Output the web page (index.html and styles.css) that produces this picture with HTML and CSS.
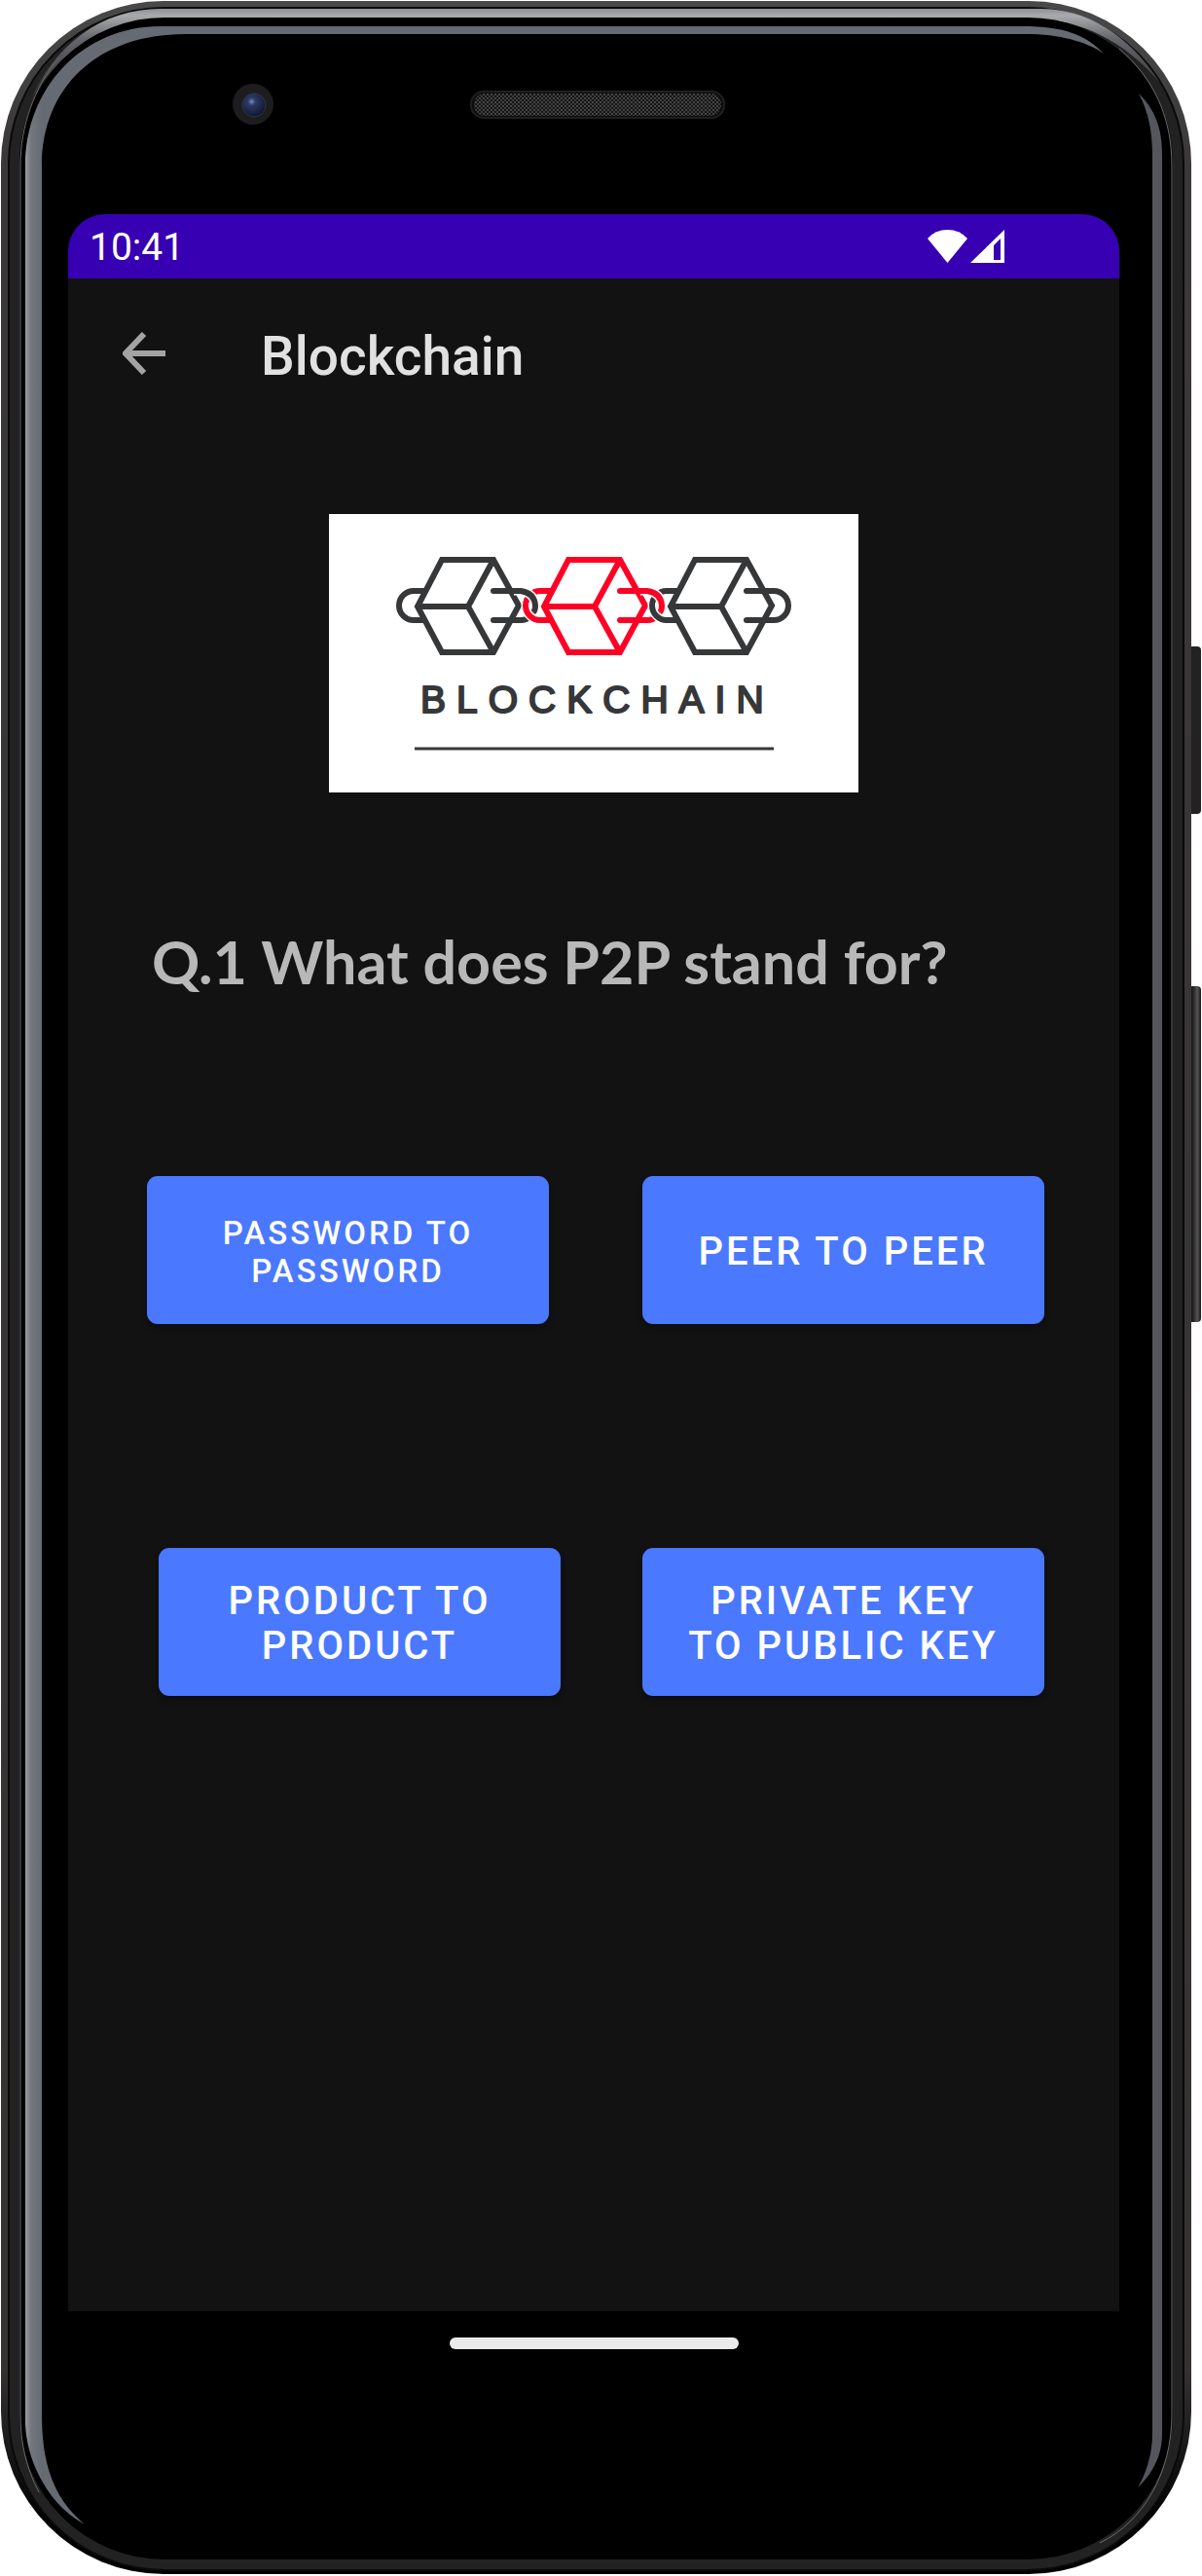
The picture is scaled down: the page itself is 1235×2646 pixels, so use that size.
FILE: index.html
```html
<!DOCTYPE html>
<html lang="en">
<head>
<meta charset="utf-8">
<meta name="viewport" content="width=device-width, initial-scale=1">
<title>Blockchain</title>
<link rel="stylesheet" href="styles.css">
</head>
<body>
<div class="phone">
  <svg class="phone-frame" viewBox="0 0 1235 2646" preserveAspectRatio="none" aria-hidden="true">
    <defs>
      <linearGradient id="shell" x1="0" y1="0" x2="0" y2="1">
        <stop offset="0" stop-color="#4a4949"/><stop offset=".06" stop-color="#3a3838"/>
        <stop offset=".92" stop-color="#353232"/><stop offset=".98" stop-color="#000"/>
      </linearGradient>
      <linearGradient id="shine" x1="0" y1="0" x2="0" y2="1">
        <stop offset="0" stop-color="#8e9094"/><stop offset=".07" stop-color="#a9aaae"/>
        <stop offset=".3" stop-color="#66686c"/><stop offset="1" stop-color="#222"/>
      </linearGradient>
      <linearGradient id="rim" gradientUnits="userSpaceOnUse" x1="26" y1="0" x2="43" y2="0">
        <stop offset="0" stop-color="#9a9b9d"/><stop offset=".35" stop-color="#73777d"/><stop offset="1" stop-color="#666a72"/>
      </linearGradient>
      <linearGradient id="key" x1="0" y1="0" x2="1" y2="0">
        <stop offset="0" stop-color="#0c0c0c"/><stop offset=".4" stop-color="#262626"/>
        <stop offset=".7" stop-color="#555"/><stop offset="1" stop-color="#181818"/>
      </linearGradient>
      <radialGradient id="lens" cx=".4" cy=".35" r=".65">
        <stop offset="0" stop-color="#7c8bb2"/><stop offset=".25" stop-color="#2b3a68"/><stop offset="1" stop-color="#10172f"/>
      </radialGradient>
      <pattern id="mesh" width="4" height="4" patternUnits="userSpaceOnUse">
        <rect width="4" height="4" fill="#161616"/><circle cx="1" cy="1" r="1" fill="#555"/><circle cx="3" cy="3" r="1" fill="#484848"/>
      </pattern>
    </defs>
    <rect x="1221" y="664" width="13" height="172" rx="4" fill="#222"/>
    <rect x="1221" y="1013" width="13" height="345" rx="4" fill="url(#key)"/>
    <rect x="1" y="1" width="1223" height="2643" rx="167" fill="url(#shell)"/>
    <rect x="9" y="8" width="1207" height="2632" rx="160" fill="#222" stroke="#0a0a0a" stroke-width="2"/>
    <path fill="url(#shine)" d="M28 110C55 45 105 9 165 9H1070C1115 9 1160 35 1192 85C1155 42 1110 20 1065 20H165C110 20 60 50 28 110Z"/>
    <rect x="21" y="19" width="1183" height="2609" rx="148" fill="#000" stroke="#000" stroke-width="2"/>
    <path fill="none" stroke="#6b6b6b" stroke-width="1" d="M60 60C35 90 21 130 21 170V2480C21 2510 27 2535 40 2560M1150 50C1185 80 1204 120 1204 170V2480C1204 2540 1175 2590 1130 2612"/>
    <path fill="url(#rim)" d="M1134 55C1115 36 1095 27 1050 27H165C85 27 26 90 26 170V2490C28 2530 50 2573 87 2593C60 2570 43 2540 43 2480V170C43 90 100 35 190 35H1060C1095 36 1120 45 1134 55Z"/>
    <path fill="#54565d" d="M1170 96C1186 112 1194 130 1194 160V2500C1194 2522 1185 2540 1169 2555C1178 2540 1184 2520 1184 2500V160C1184 135 1180 115 1170 96Z"/>
    <circle cx="260" cy="107" r="21" fill="#1d1d1f"/>
    <circle cx="261" cy="108" r="12" fill="url(#lens)" stroke="#333640" stroke-width="1"/>
    <rect x="484" y="94" width="260" height="27" rx="13" fill="#0c0c0d" stroke="#202022" stroke-width="2"/>
    <rect x="487" y="96" width="254" height="23" rx="11" fill="url(#mesh)"/>
  </svg>

  <div class="screen">
    <div class="status-bar">
      <span>10:41</span>
      <svg class="status-icons" viewBox="0 0 80 36" aria-label="Wi-Fi and mobile signal" role="img">
        <path fill="#fff" d="M0 9Q8 0 20.500 0T41 9L20.500 34Z"/>
        <path fill="#fff" fill-rule="evenodd" d="M79 0V34H44ZM75 9L68 16V31H75Z"/>
      </svg>
    </div>

    <header class="app-bar">
      <button class="back" type="button" aria-label="Back">
        <svg viewBox="0 0 44 44"><path d="M44 22H4M22 2L3 22L22 42" fill="none" stroke="#a3a3a3" stroke-width="6"/></svg>
      </button>
      <h1 class="title">Blockchain</h1>
    </header>

    <main class="quiz">
      <svg class="logo" viewBox="0 0 544 286" role="img" aria-label="Blockchain logo">
        <defs>
          <path id="cube" d="M116 47H169L195 94L169 142H116L91 95ZM91 95H143L169 47M143 95L169 142"/>
          <path id="link-left" d="M99 79H87A15 15 0 0 0 87 109H99"/>
          <path id="link-right" d="M169 79H197A15 15 0 0 1 197 109H169"/>
          <path id="link-over" d="M190 79H197Q211 81 212 94Q212 99 210 101"/>
        </defs>
        <rect width="544" height="286" fill="#fff"/>
        <g fill="none" stroke-width="6" stroke="#363739">
          <use href="#link-left"/><use href="#cube"/><use href="#link-right" stroke-linecap="round"/>
          <g stroke="#ff0025">
            <use href="#link-left" x="130" stroke="#fff" stroke-width="9"/>
            <use href="#link-left" x="130"/>
          </g>
          <use href="#link-over" stroke="#fff" stroke-width="9"/>
          <use href="#link-over"/>
          <g stroke="#ff0025">
            <use href="#cube" x="130"/><use href="#link-right" x="130" stroke-linecap="round"/>
          </g>
          <use href="#link-left" x="260" stroke="#fff" stroke-width="9"/>
          <use href="#link-left" x="260"/>
          <use href="#link-over" x="130" stroke="#fff" stroke-width="9"/>
          <use href="#link-over" x="130" stroke="#ff0025"/>
          <use href="#cube" x="260"/><use href="#link-right" x="260" stroke-linecap="round"/>
          <path d="M88 241H457" stroke-width="3"/>
        </g>
        <text class="logo-text" x="94" y="204">BLOCKCHAIN</text>
      </svg>

      <h2 class="question">Q.1 What does P2P stand for?</h2>

      <div class="answers">
        <button class="answer answer-small" type="button">Password to Password</button>
        <button class="answer" type="button">Peer to Peer</button>
      </div>
      <div class="answers answers-second">
        <button class="answer" type="button">Product to Product</button>
        <button class="answer" type="button">Private Key to Public Key</button>
      </div>
    </main>
  </div>

  <div class="nav-bar"><div class="nav-handle"></div></div>
</div>
</body>
</html>
```
FILE: styles.css
```css
* {
  box-sizing: border-box;
}

body {
  margin: 0;
  background: #fff;
  font-family: Roboto, "Liberation Sans", sans-serif;
}

.phone {
  position: relative;
  display: flex;
  flex-direction: column;
  min-height: 100vh;
  padding: 220px 85px 0 70px;
}

/* Device body, drawn behind the screen */
.phone-frame {
  position: absolute;
  inset: 0;
  width: 100%;
  height: 100%;
}

.screen {
  position: relative;
  flex: 1;
  overflow: hidden;
  border-radius: 38px 38px 0 0;
  background: #121212;
}

.status-bar {
  display: flex;
  align-items: center;
  justify-content: space-between;
  height: 66px;
  padding: 2px 117px 0 22px;
  background: #3700b3;
  color: #fff;
  font-size: 39px;
}

.status-icons {
  width: 80px;
  height: 36px;
}

.app-bar {
  display: flex;
  align-items: center;
  gap: 98px;
  height: 154px;
  padding-left: 56px;
}

.back {
  padding: 0;
  border: 0;
  background: none;
}

.back svg {
  display: block;
  width: 44px;
  height: 44px;
}

.title {
  margin: 0;
  padding-top: 6px;
  color: #e1e1e1;
  font-size: 55px;
  font-weight: 500;
}

.quiz {
  padding-top: 88px;
}

.logo {
  display: block;
  width: 544px;
  max-width: 100%;
  margin: 0 auto;
}

.logo-text {
  fill: #363739;
  stroke: #363739;
  stroke-width: 2px;
  stroke-linejoin: round;
  font-family: "Liberation Sans", Arial, sans-serif;
  font-size: 39px;
  letter-spacing: 11px;
}

.question {
  margin: 136px 0 0;
  padding: 0 86px;
  color: #b8b8b8;
  font-family: Lato, sans-serif;
  font-size: 61px;
  font-weight: 700;
  line-height: 76px;
}

.answers {
  display: grid;
  grid-template-columns: 1fr 1fr;
  gap: 96px;
  margin-top: 182px;
  padding: 0 77px 0 81px;
}

.answers-second {
  gap: 84px;
  margin-top: 230px;
  padding-left: 93px;
}

.answer {
  height: 152px;
  padding: 3px 40px 0;
  border: 0;
  border-radius: 11px;
  background: #4a78ff;
  box-shadow: 0 4px 6px rgba(0, 0, 0, 0.3);
  color: #fff;
  font-family: inherit;
  font-size: 40px;
  font-weight: 500;
  line-height: 46px;
  letter-spacing: 3px;
  text-transform: uppercase;
}

.answer-small {
  font-size: 33px;
  line-height: 39px;
}

.nav-bar {
  position: relative;
  display: flex;
  justify-content: center;
  height: 272px;
  padding-top: 27px;
}

.nav-handle {
  width: 297px;
  height: 12px;
  border-radius: 6px;
  background: #ebebeb;
}
```
